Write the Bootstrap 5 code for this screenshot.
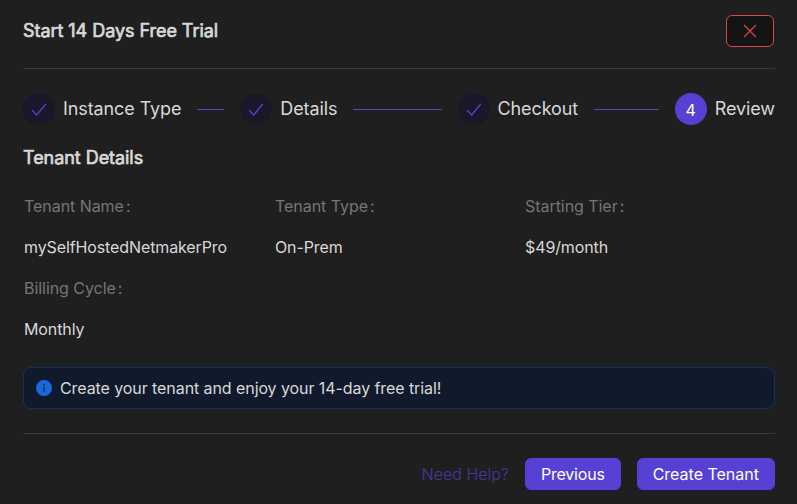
<!DOCTYPE html>
<html lang="en" data-bs-theme="dark">
<head>
<meta charset="utf-8">
<meta name="viewport" content="width=device-width, initial-scale=1">
<title>Start 14 Days Free Trial</title>
<link href="https://cdn.jsdelivr.net/npm/bootstrap@5.3.0/dist/css/bootstrap.min.css" rel="stylesheet">
<style>
body{background:#1f1f1f;color:#d8d8d8;font:400 16px/1.5 Inter,"Liberation Sans",sans-serif;overflow:hidden}
.trial-panel{width:797px;height:504px;padding:15px 22px 0 23px}
.panel-title{font-size:18px;line-height:32px;font-weight:400;-webkit-text-stroke:.7px #d8d8d8;color:#d8d8d8;letter-spacing:-.05px}
.section-title{margin-top:17px}
.rule{height:1px;background:#3a3a3a}
.rule-top{margin-top:21px}
.gap-above{margin-top:24px}
.btn-close-x{width:48px;height:32px;margin-right:1px;background:#141414;border:1px solid #dc4446;border-radius:6px;color:#dc4446}
.step{flex:1 1 0;min-width:0}
.step-end{flex:none}
.step-dot{width:32px;height:32px;border-radius:50%;background:#1a1729;color:#5641d4;flex:none}
.step-now{background:#5641d4;color:#fff;padding-top:2px}
.step-label{font-size:18px;line-height:32px;white-space:nowrap;letter-spacing:-.1px}
.step-line{height:1px;background:#5641d4;flex:1}
.fact-name{color:#757575;line-height:25px;letter-spacing:-.05px}
.colon{margin-left:2px}
.fact-value{line-height:25px;letter-spacing:-.11px}
.fact-grid{display:grid;grid-template-columns:251px 250px 1fr;row-gap:16px;padding-left:1px;margin-top:20px}
.notice{height:42px;margin-top:25px;background:#111a2c;border:1px solid #15325b;border-radius:8px;padding:0 12px;letter-spacing:-.08px}
.btn-main{height:32px;padding:0 15px;background:#5641d4;border:1px solid #5641d4;border-radius:6px;color:#fff;line-height:30px;box-shadow:0 2px 0 rgba(30,22,80,.5)}
.btn-main:hover{background:#6a58dc;color:#fff}
.btn-prev{letter-spacing:-.2px}
.help-link{color:#4a35a0;text-decoration:none;font-weight:300}
</style>
</head>
<body>
<main class="trial-panel">
  <header class="d-flex justify-content-between">
    <h1 class="panel-title mb-0">Start 14 Days Free Trial</h1>
    <button class="btn btn-close-x p-0 d-flex align-items-center justify-content-center" type="button" aria-label="Close">
      <svg width="14" height="14" viewBox="0 0 14 14" fill="none" stroke="currentColor" stroke-width="1.25"><path d="M1 1l12 12M13 1L1 13"/></svg>
    </button>
  </header>
  <div class="rule rule-top"></div>
  <div class="d-flex gap-3 gap-above">
    <div class="step d-flex align-items-center">
      <span class="step-dot d-flex align-items-center justify-content-center me-2"><svg width="16" height="16" viewBox="0 0 16 16" fill="none" stroke="currentColor" stroke-width="1.3"><path d="M1 9l4.700 5L14.800 3"/></svg></span>
      <span class="step-label me-3">Instance Type</span><span class="step-line"></span>
    </div>
    <div class="step d-flex align-items-center">
      <span class="step-dot d-flex align-items-center justify-content-center me-2"><svg width="16" height="16" viewBox="0 0 16 16" fill="none" stroke="currentColor" stroke-width="1.3"><path d="M1 9l4.700 5L14.800 3"/></svg></span>
      <span class="step-label me-3">Details</span><span class="step-line"></span>
    </div>
    <div class="step d-flex align-items-center">
      <span class="step-dot d-flex align-items-center justify-content-center me-2"><svg width="16" height="16" viewBox="0 0 16 16" fill="none" stroke="currentColor" stroke-width="1.3"><path d="M1 9l4.700 5L14.800 3"/></svg></span>
      <span class="step-label me-3">Checkout</span><span class="step-line"></span>
    </div>
    <div class="step-end d-flex align-items-center">
      <span class="step-dot step-now d-flex align-items-center justify-content-center me-2">4</span>
      <span class="step-label">Review</span>
    </div>
  </div>
  <h2 class="panel-title section-title mb-0">Tenant Details</h2>
  <div class="fact-grid">
    <div class="fact-name">Tenant Name<span class="colon">:</span></div>
    <div class="fact-name">Tenant Type<span class="colon">:</span></div>
    <div class="fact-name">Starting Tier<span class="colon">:</span></div>
    <div class="fact-value">mySelfHostedNetmakerPro</div>
    <div class="fact-value">On-Prem</div>
    <div class="fact-value">$49/month</div>
    <div class="fact-name">Billing Cycle<span class="colon">:</span></div><div></div><div></div>
    <div class="fact-value">Monthly</div>
  </div>
  <div class="notice d-flex align-items-center gap-2">
    <svg width="16" height="16" viewBox="0 0 16 16"><circle cx="8" cy="8" r="8" fill="#1668dc"/><path d="M7.200 4h1.600v1.700H7.200zM7.200 6.800h1.600V12H7.200z" fill="#15325b"/></svg>
    <span>Create your tenant and enjoy your 14-day free trial!</span>
  </div>
  <div class="rule gap-above"></div>
  <footer class="d-flex justify-content-end align-items-center gap-3 gap-above">
    <a class="help-link" href="#">Need Help?</a>
    <button class="btn btn-main btn-prev" type="button">Previous</button>
    <button class="btn btn-main" type="button">Create Tenant</button>
  </footer>
</main>
<script src="https://cdn.jsdelivr.net/npm/bootstrap@5.3.0/dist/js/bootstrap.bundle.min.js"></script>
</body>
</html>
